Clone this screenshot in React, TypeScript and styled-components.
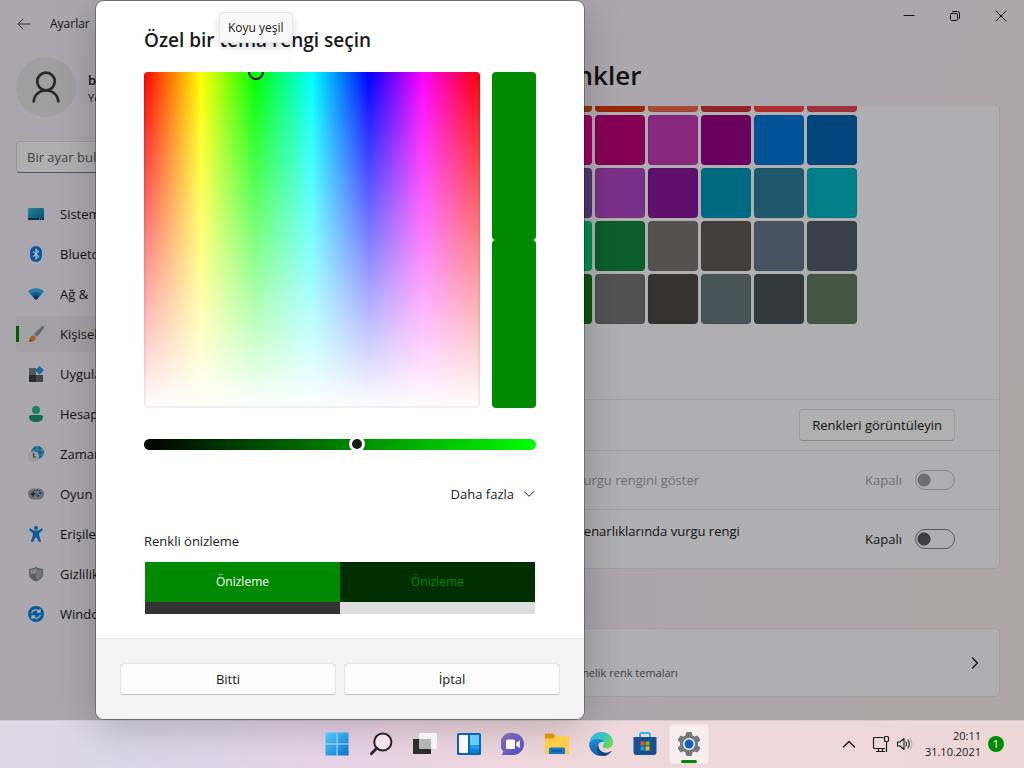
import React from "react";
import styled, { createGlobalStyle } from "styled-components";

const GlobalStyle = createGlobalStyle`
  *, *::before, *::after { box-sizing: border-box; }
  body {
    margin: 0;
    font-family: "Open Sans", "Noto Sans", sans-serif;
    font-size: 13px;
    line-height: 20px;
    color: #1a1a1a;
  }
  button, input { font: inherit; color: inherit; }
  h1, h2, p { margin: 0; font-weight: inherit; }
`;

const ACCENT = "#008a00";

const Screen = styled.div`
  display: flex;
  flex-direction: column;
  height: 100vh;
  overflow: hidden;
`;

/* ---------- settings window ---------- */

const AppWindow = styled.main`
  position: relative;
  flex: 1;
  min-height: 0;
  display: flex;
  flex-direction: column;
  background:
    radial-gradient(ellipse at 56% 84%, rgba(240, 230, 248, 0.6), transparent 16%),
    linear-gradient(115deg, #f3eef8 0%, #f5f0f8 45%, #f8f0f5 70%, #f8efef 100%);
`;

const TitleBar = styled.header`
  display: flex;
  align-items: center;
  height: 48px;
  padding-left: 8px;
`;

const BareButton = styled.button`
  display: grid;
  place-items: center;
  padding: 0;
  border: 0;
  background: transparent;
`;

const BackButton = styled(BareButton)`
  width: 32px;
  height: 32px;
`;

const AppName = styled.span`
  flex: 1;
  padding-left: 10px;
  font-size: 12px;
`;

const WindowControls = styled.div`
  display: flex;
  align-self: flex-start;
`;

const WindowControl = styled(BareButton)`
  width: 46px;
  height: 32px;
`;

const Body = styled.div`
  flex: 1;
  min-height: 0;
  display: flex;
`;

const Sidebar = styled.aside`
  width: 312px;
  flex: none;
  padding: 9px 16px 0;
`;

const Account = styled.div`
  display: flex;
  align-items: center;
  gap: 12px;
`;

const AccountText = styled.div`
  padding-top: 4px;
`;

const Avatar = styled.div`
  display: grid;
  place-items: center;
  width: 60px;
  height: 60px;
  border-radius: 50%;
  background: #e5e4e6;
`;

const AccountName = styled.p`
  font-weight: 600;
  line-height: 18px;
`;

const AccountKind = styled.p`
  font-size: 11px;
  line-height: 18px;
`;

const SearchBox = styled.input`
  display: block;
  width: 100%;
  height: 32px;
  margin: 24px 0 23px;
  padding: 0 10px;
  border: 1px solid #dcdadd;
  border-bottom-color: #77757a;
  border-radius: 4px;
  background: #fcfbfd;
  &::placeholder { color: #605e62; opacity: 1; }
`;

const Nav = styled.nav`
  display: flex;
  flex-direction: column;
  gap: 4px;
`;

const NavLink = styled.a<{ $active?: boolean }>`
  display: flex;
  align-items: center;
  gap: 16px;
  height: 36px;
  padding-left: 9px;
  border-left: 3px solid transparent;
  border-radius: 4px;
  color: inherit;
  text-decoration: none;
  background: ${(p) => (p.$active ? "linear-gradient(#008a00, #008a00) 0 center / 3px 16px no-repeat border-box, #eae6ee" : "transparent")};
`;

const Main = styled.section`
  flex: 1;
  min-width: 0;
  display: flex;
  flex-direction: column;
`;

const PageTitle = styled.h1`
  padding: 7px 24px 11px 233px;
  font-size: 26px;
  line-height: 40px;
  font-weight: 600;
`;

const Scroller = styled.div`
  flex: 1;
  min-height: 0;
  overflow: hidden;
  display: flex;
  flex-direction: column;
  justify-content: flex-end;
  gap: 59px;
  padding: 0 24px 23px 0;
`;

const Card = styled.div`
  flex: none;
  border: 1px solid #e6e2e7;
  border-radius: 4px;
  background: #fbfafc;
`;

const SwatchGrid = styled.div`
  display: grid;
  grid-template-columns: repeat(9, 50px);
  gap: 3px;
  padding: 0 0 75px 70px;
`;

const Swatch = styled.button<{ $color: string }>`
  height: 50px;
  padding: 0;
  border: 1px solid rgba(0, 0, 0, 0.06);
  border-radius: 4px;
  background: ${(p) => p.$color};
`;

const Row = styled.div<{ $tall?: boolean; $disabled?: boolean }>`
  display: flex;
  align-items: center;
  justify-content: flex-end;
  gap: 12px;
  height: ${(p) => (p.$tall ? 59 : 51)}px;
  padding: 0 44px 0 264px;
  border-top: 1px solid #e6e2e7;
  color: ${(p) => (p.$disabled ? "#a3a1a4" : "inherit")};
`;

const RowText = styled.span<{ $top?: boolean }>`
  flex: 1;
  align-self: ${(p) => (p.$top ? "flex-start" : "center")};
  padding-top: ${(p) => (p.$top ? 11 : 0)}px;
`;

const Standard = styled.button`
  height: 32px;
  padding: 0 12px;
  border: 1px solid #e2e1e3;
  border-bottom-color: #c4c3c5;
  border-radius: 4px;
  background: #fcfcfd;
`;

const ToggleLabel = styled.label`
  display: flex;
  align-items: center;
  gap: 13px;
`;

const Toggle = styled.input`
  appearance: none;
  width: 40px;
  height: 20px;
  margin: 0;
  border: 1px solid #807f81;
  border-radius: 10px;
  background: radial-gradient(circle at 8px 9px, #5c5b5d 6px, transparent 7px);
  &:disabled {
    border-color: #bdbbbe;
    background: radial-gradient(circle at 8px 9px, #9e9d9f 6px, transparent 7px);
  }
`;

const RelatedLink = styled.a`
  display: flex;
  align-items: center;
  justify-content: space-between;
  height: 67px;
  padding: 0 19px 0 257px;
  color: inherit;
  text-decoration: none;
`;

const Caption = styled.span`
  padding-top: 20px;
  font-size: 11px;
  color: #5f5e60;
`;

/* ---------- colour dialog ---------- */

const Smoke = styled.div`
  position: absolute;
  inset: 0;
  display: flex;
  align-items: center;
  padding-left: 96px;
  background: rgba(0, 0, 0, 0.3);
`;

const Dialog = styled.div`
  position: relative;
  width: 488px;
  border-radius: 8px;
  background: #fff;
  box-shadow: 0 0 0 1px rgba(0, 0, 0, 0.28), 0 8px 40px rgba(0, 0, 0, 0.22);
`;

const DialogBody = styled.div`
  padding: 25px 48px 24px;
`;

const DialogTitle = styled.h2`
  margin-bottom: 18px;
  font-size: 19px;
  line-height: 28px;
  font-weight: 600;
`;

const Tooltip = styled.div`
  position: absolute;
  top: 11px;
  left: 123px;
  padding: 6px 8px 5px;
  border: 1px solid #e6e6e6;
  border-radius: 4px;
  background: #f9f9f9;
  box-shadow: 0 4px 8px rgba(0, 0, 0, 0.14);
  font-size: 12px;
  line-height: 18px;
`;

const PickerRow = styled.div`
  display: flex;
  gap: 12px;
  height: 336px;
`;

const Spectrum = styled.div`
  position: relative;
  flex: 1;
  overflow: hidden;
  border-radius: 4px;
  background:
    linear-gradient(to bottom, rgba(255, 255, 255, 0), #fff),
    linear-gradient(to right, #f00, #ff0 17%, #0f0 33%, #0ff 50%, #00f 67%, #f0f 83%, #f00);
  &::after {
    content: "";
    position: absolute;
    inset: 0;
    border: 2px solid rgba(0, 0, 0, 0.06);
    border-top: 0;
    border-radius: 4px;
  }
`;

const SpectrumThumb = styled.span`
  position: absolute;
  top: -8px;
  left: 104px;
  width: 16px;
  height: 16px;
  border: 2px solid #111;
  border-radius: 50%;
`;

const ColorPair = styled.div`
  display: flex;
  flex-direction: column;
  width: 44px;
`;

const ColorBlock = styled.div`
  flex: 1;
  border-radius: 4px;
  background: ${ACCENT};
`;

const BrightnessTrack = styled.div`
  display: flex;
  align-items: center;
  height: 11px;
  margin: 31px 0 28px;
  border-radius: 6px;
  background: linear-gradient(to right, #000, #0f0);
`;

const Brightness = styled.input`
  appearance: none;
  width: 100%;
  height: 24px;
  margin: 0;
  background: none;
  &::-webkit-slider-runnable-track {
    height: 24px;
  }
  &::-webkit-slider-thumb {
    appearance: none;
    width: 16px;
    height: 16px;
    margin-top: 3px;
    border: 3px solid #fff;
    border-radius: 50%;
    background: #1a1a1a;
    box-shadow: 0 0 0 1px rgba(0, 0, 0, 0.08);
  }
`;

const MoreButton = styled.button`
  display: flex;
  align-items: center;
  gap: 8px;
  height: 32px;
  margin: 0 0 21px auto;
  padding: 0;
  border: 0;
  background: transparent;
`;

const PreviewLabel = styled.p`
  margin-bottom: 11px;
`;

const Preview = styled.div`
  display: grid;
  grid-template: 40px 12px / 1fr 1fr;
  margin: 0 1px;
`;

const PreviewCell = styled.div<{ $bg: string; $fg?: string }>`
  display: grid;
  place-items: center;
  font-size: 12px;
  background: ${(p) => p.$bg};
  color: ${(p) => p.$fg ?? "inherit"};
`;

const DialogFooter = styled.footer`
  display: grid;
  grid-template-columns: 1fr 1fr;
  gap: 8px;
  padding: 24px;
  border-top: 1px solid #e5e5e5;
  border-radius: 0 0 8px 8px;
  background: #f3f3f3;
`;

/* ---------- taskbar ---------- */

const Taskbar = styled.footer`
  flex: none;
  display: grid;
  grid-template-columns: 1fr auto 1fr;
  align-items: center;
  height: 48px;
  padding-bottom: 1px;
  border-top: 1px solid #d3cbd6;
  background: linear-gradient(to right, #dfd8e5 0%, #d9d7e7 12%, #dfd6e8 22%, #ead4e8 34%, #f0d8dd 50%, #eed8da 75%, #ecd6d6 100%);
`;

const Apps = styled.div`
  grid-column: 2;
  display: flex;
  gap: 4px;
  padding-left: 2px;
`;

const AppButton = styled(BareButton)<{ $active?: boolean }>`
  position: relative;
  width: 40px;
  height: 40px;
  border: 1px solid ${(p) => (p.$active ? "#efe2e4" : "transparent")};
  border-radius: 4px;
  background: ${(p) => (p.$active ? "#f8eef0" : "transparent")};
  &::after {
    content: "";
    display: ${(p) => (p.$active ? "block" : "none")};
    position: absolute;
    bottom: 0;
    left: 11px;
    width: 16px;
    height: 3px;
    border-radius: 2px;
    background: ${ACCENT};
  }
`;

const Tray = styled.div`
  display: flex;
  align-items: center;
  justify-content: flex-end;
  padding-right: 20px;
`;

const TrayButton = styled(BareButton)<{ $gap?: number }>`
  width: 18px;
  height: 32px;
  margin-right: ${(p) => p.$gap ?? 0}px;
`;

const Clock = styled.time`
  margin-right: 7px;
  font-size: 11px;
  line-height: 16px;
  text-align: right;
`;

const Badge = styled.span`
  display: grid;
  place-items: center;
  width: 16px;
  height: 16px;
  border-radius: 50%;
  background: ${ACCENT};
  color: #fff;
  font-size: 11px;
  line-height: 16px;
`;

/* ---------- icons ---------- */

const stroke = { fill: "none", stroke: "#1a1a1a", strokeLinecap: "round", strokeLinejoin: "round" } as const;

const navIcons: Record<string, React.ReactNode> = {
  system: (
    <>
      <defs><linearGradient id="sys" x1="0" y1="0" x2="1" y2="1"><stop stopColor="#35c1d6" /><stop offset="1" stopColor="#0c68a8" /></linearGradient></defs>
      <rect y="2" width="16" height="12" rx="1" fill="url(#sys)" />
      <path d="M0 12h16v1a1 1 0 0 1-1 1H1a1 1 0 0 1-1-1z" fill="#0b4468" />
      <path d="M11 12.5h1v1h-1zM13 12.5h1v1h-1z" fill="#cfe6f2" />
    </>
  ),
  bluetooth: (
    <>
      <rect x="2" width="12" height="16" rx="6" fill="#0a7ff0" />
      <path d="M5.2 5.4 10.6 10.4 8 12.7V3.3l2.6 2.3-5.4 5" fill="none" stroke="#fff" strokeWidth="1.2" />
    </>
  ),
  network: (
    <>
      <path d="M8 14 0 5.6C4.5 1.2 11.5 1.2 16 5.6z" fill="#35b5e8" />
      <path d="M8 14 2.6 8.3c3.1-3 7.7-3 10.8 0z" fill="#1c86d1" />
      <path d="M8 14 4.8 10.7c1.9-1.800 4.500-1.800 6.400 0z" fill="#0c4f9c" />
    </>
  ),
  brush: (
    <>
      <path d="M15.7.3c.5.5.3 1.3-.1 1.9L9.2 10.8 6 8.1 13.8.6c.5-.5 1.400-.8 1.900-.3z" fill="#8c9296" />
      <path d="M6 8.1 9.2 10.8 8 12 4.9 9.2z" fill="#c4c9cc" />
      <path d="M4.7 9.3 7.9 12c-.3 2.800-3.700 4.300-7.500 3.700C2.200 14.500 1.200 10 4.700 9.300z" fill="#f08a1d" />
      <path d="M.4 15.7c1.300-.7 1.600-1.800 1.900-2.800l2.400 1.600c-1 .9-2.700 1.400-4.300 1.200z" fill="#c85a10" />
    </>
  ),
  apps: (
    <>
      <path d="M1 2h7v7H1z" fill="#7b8084" />
      <path d="M1 9h7v7H2a1 1 0 0 1-1-1z" fill="#3b3f43" />
      <path d="M8 9h7v6a1 1 0 0 1-1 1H8z" fill="#5e6468" />
      <path d="m11.500 0 4.500 4.300-4.500 4.400L7.200 4.300z" fill="#2a97e0" />
    </>
  ),
  accounts: (
    <>
      <circle cx="8" cy="4" r="4" fill="#2ab793" />
      <path d="M3 9h10a2 2 0 0 1 2 2c0 3.300-3 5-7 5s-7-1.700-7-5a2 2 0 0 1 2-2z" fill="#189a7a" />
    </>
  ),
  time: (
    <>
      <circle cx="9.500" cy="6.500" r="6.500" fill="#1590cc" />
      <path d="M9.500 0v13M3.500 4h12M3.500 9h12M13 1.200c2 4 2 7 0 10.600" stroke="#6fd0f2" strokeWidth=".8" fill="none" />
      <circle cx="5.500" cy="10.500" r="5.500" fill="#dedede" />
      <path d="M5.500 7v4H8" fill="none" stroke="#555" strokeWidth="1.200" />
    </>
  ),
  gaming: (
    <>
      <rect y="2.500" width="16" height="11" rx="5.500" fill="#9ba1a6" />
      <path d="M5 5.500v5M2.500 8h5" stroke="#33373a" strokeWidth="1.300" />
      <path d="M11 4h1v1h-1zM6 4h1v1H6zM8.500 4h1v1h-1z" fill="#33373a" />
      <circle cx="10" cy="9.500" r="1.200" fill="#1277d3" /><circle cx="12.500" cy="7" r="1.200" fill="#1277d3" />
    </>
  ),
  access: (
    <>
      <circle cx="8" cy="2" r="2" fill="#1583d8" />
      <path d="M2 2.300 6 4.500h4L14 2.300l1 1.700-3.800 3v2.500l2 6-2.200.5L8.500 11.500h-1L5 16l-2.200-.5 2-6V7L1 4z" fill="#1583d8" />
    </>
  ),
  privacy: (
    <>
      <path d="M8 .8c2 1.500 4.300 2 7 2v5c0 4-3 6.400-7 7.700-4-1.300-7-3.700-7-7.700v-5c2.700 0 5-.5 7-2z" fill="#82888c" />
      <path d="M8 2.200c1.700 1.100 3.600 1.600 5.800 1.700v3.900c0 3.200-2.400 5.200-5.800 6.400z" fill="#a5abaf" />
      <path d="M8 2.200C6.300 3.300 4.400 3.800 2.200 3.900v3.900H8z" fill="#bfc4c7" />
    </>
  ),
  update: (
    <>
      <circle cx="8" cy="8" r="8" fill="#0b85d8" />
      <path d="M3.500 7.200C4.200 3.800 9 2.600 11.600 5.400M12 3v3H9M12.500 8.800c-.7 3.400-5.500 4.600-8.100 1.800M4 13v-3h3" fill="none" stroke="#fff" strokeWidth="1.300" />
    </>
  ),
};

const appIcons: Record<string, React.ReactNode> = {
  start: (
    <>
      <defs><linearGradient id="win" x1="0" y1="0" x2="1" y2="1"><stop stopColor="#4fd0ff" /><stop offset="1" stopColor="#0672cf" /></linearGradient></defs>
      <path d="M.5.500h11v11H.5zM12.500.500h11v11h-11zM.5 12.500h11v11H.5zM12.500 12.500h11v11h-11z" fill="url(#win)" />
    </>
  ),
  search: (
    <>
      <circle cx="13.800" cy="10" r="8.600" fill="#f3e4f0" stroke="#242424" strokeWidth="2" />
      <path d="M7.500 16.500 2.300 21.700" stroke="#242424" strokeWidth="2.800" strokeLinecap="round" />
    </>
  ),
  taskview: (
    <>
      <path d="M0 7h18v15H0z" fill="#2d2d2d" />
      <path d="M6 1h18v16H6z" fill="#f4f4f4" />
      <path d="M6 7h12v10H6z" fill="#b4b4b4" />
    </>
  ),
  widgets: (
    <>
      <rect y="1" width="24" height="22" rx="1.500" fill="#0f62b4" />
      <rect x="2" y="3" width="9" height="18" rx="1" fill="#f8f8f8" />
      <path d="M13 3h9v10h-9z" fill="#60d2fc" /><path d="M13 13h9v4h-9z" fill="#1a9df0" /><path d="M13 17h9v4h-9z" fill="#0a7fdc" />
    </>
  ),
  chat: (
    <>
      <defs><linearGradient id="chat" x1="0" y1="0" x2="1" y2="1"><stop stopColor="#8d6cb0" /><stop offset="1" stopColor="#4a50c8" /></linearGradient></defs>
      <path d="M12 1a11 11 0 1 1 0 22H1.500c-.6 0-.8-.6-.4-1l1.300-2.500A11 11 0 0 1 12 1z" fill="url(#chat)" />
      <rect x="5" y="7.500" width="9" height="9.500" rx="1.500" fill="#fff" />
      <path d="m15.300 11 3.500-2.700v8l-3.500-2.700z" fill="#fff" />
    </>
  ),
  explorer: (
    <>
      <path d="M0 2.500A1 1 0 0 1 1 1.500h7l2.500 2.500-2.500 3H0z" fill="#d99406" />
      <path d="M0 6.500h8l2.500-2.500H23a1 1 0 0 1 1 1v17H0z" fill="#fdce45" />
      <path d="M4 22v-5a1.500 1.500 0 0 1 1.500-1.500h13A1.500 1.500 0 0 1 20 17v5z" fill="#1277cf" />
      <path d="M7 18h10v1.500H7z" fill="#0b508f" />
    </>
  ),
  edge: (
    <>
      <defs>
        <linearGradient id="edgeA" x1="0" y1="0" x2="1" y2=".6"><stop stopColor="#2fb3e8" /><stop offset=".6" stopColor="#36c9b8" /><stop offset="1" stopColor="#6edc52" /></linearGradient>
        <linearGradient id="edgeB" x1="0" y1="0" x2="0" y2="1"><stop stopColor="#1b8fdb" /><stop offset="1" stopColor="#0f5fb0" /></linearGradient>
      </defs>
      <path d="M.3 10.500C1.300 4.500 6.200 0 12.200 0 19 0 24 4.700 24 10.200c0 3.900-2.900 6.300-6.300 6.300-2.600 0-4.200-1-4.200-2 0-.8 1.300-1.100 1.300-3.200 0-2.600-2.700-4.700-6.300-4.700C4.800 6.600 1.800 8.200.3 10.500z" fill="url(#edgeA)" />
      <path d="M.1 11.500C1.500 8.300 4.800 6.600 8.500 6.600c3.400 0 5.800 1.700 6.300 3.700-1.300-.8-5.500-.6-5.500 4.200 0 4.500 3.600 8.300 7.200 8.500A12 12 0 0 1 .1 11.500z" fill="url(#edgeB)" />
      <path d="M9.300 13.500c0 4.700 4.300 7.500 8 7.200 2.200-.2 3.800-.9 4.800-1.700.4-.3.700 0 .4.400A12 12 0 0 1 14 24C9 23.500 6 18 9.300 13.500z" fill="#10447e" />
    </>
  ),
  store: (
    <>
      <path d="M7 5V2.500A1.500 1.500 0 0 1 8.500 1h7A1.500 1.500 0 0 1 17 2.500V5" fill="none" stroke="#2fb4ec" strokeWidth="2" />
      <path d="M.5 5h23v15a3 3 0 0 1-3 3h-17a3 3 0 0 1-3-3z" fill="#174f93" />
      <path d="M7.500 9.500h4v4h-4z" fill="#f25022" /><path d="M12.500 9.500h4v4h-4z" fill="#7fba00" />
      <path d="M7.500 14.500h4v4h-4z" fill="#00a4ef" /><path d="M12.500 14.500h4v4h-4z" fill="#ffb900" />
    </>
  ),
  settings: (
    <>
      <path d="M9.600.500h4.800l.7 3.300 2.200 1.300 3.200-1.100 2.400 4.200-2.500 2.200v3.200l2.500 2.200-2.400 4.200-3.200-1.100-2.200 1.300-.7 3.300H9.600l-.7-3.300-2.200-1.300-3.200 1.100-2.400-4.200 2.500-2.200v-3.200L1.100 8.200 3.500 4l3.200 1.100 2.200-1.300z" fill="#74797e" stroke="#74797e" strokeLinejoin="round" />
      <circle cx="12" cy="12" r="6" fill="#f2f2f2" />
      <circle cx="12" cy="12" r="4.500" fill="#0f62b4" />
    </>
  ),
};

const NavIcon = ({ name }: { name: string }) => (
  <svg width="16" height="16" viewBox="0 0 16 16" aria-hidden="true">{navIcons[name]}</svg>
);

const AppIcon = ({ name }: { name: string }) => (
  <svg width="24" height="24" viewBox="0 0 24 24" aria-hidden="true">{appIcons[name]}</svg>
);

/* ---------- data ---------- */

const navItems = [
  ["system", "Sistem"],
  ["bluetooth", "Bluetooth"],
  ["network", "Ağ &"],
  ["brush", "Kişiselleştirme"],
  ["apps", "Uygulamalar"],
  ["accounts", "Hesaplar"],
  ["time", "Zaman ve dil"],
  ["gaming", "Oyun"],
  ["access", "Erişilebilirlik"],
  ["privacy", "Gizlilik"],
  ["update", "Windows Update"],
];

const swatches = [
  "#ffb900", "#ff8c00", "#f7630c", "#ca5010", "#da3b01", "#ef6950", "#d13438", "#ff4343", "#e74856",
  "#e81123", "#ea005e", "#c30052", "#e3008c", "#bf0077", "#c239b3", "#9a0089", "#0078d7", "#0063b1",
  "#8e8cd8", "#6b69d6", "#8764b8", "#744da9", "#b146c2", "#881798", "#0099bc", "#2d7d9a", "#00b7c3",
  "#038387", "#00b294", "#018574", "#00cc6a", "#10893e", "#7a7574", "#5d5a58", "#68768a", "#515c6b",
  "#567c73", "#486860", "#498205", "#107c10", "#767676", "#4c4a48", "#69797e", "#4a5459", "#647c64",
];

const apps = [
  ["start", "Başlat"],
  ["search", "Ara"],
  ["taskview", "Görev görünümü"],
  ["widgets", "Pencere öğeleri"],
  ["chat", "Sohbet"],
  ["explorer", "Dosya Gezgini"],
  ["edge", "Edge"],
  ["store", "Store"],
  ["settings", "Ayarlar"],
];

const SettingsSidebar = () => (
  <Sidebar>
    <Account>
      <Avatar>
        <svg width="28" height="32" viewBox="0 0 28 32" {...stroke} stroke="#3c3b3d" strokeWidth="2.700" strokeLinecap="butt" aria-hidden="true">
          <circle cx="14" cy="10.500" r="8.800" />
          <path d="M1.700 31.500c0-7 5-12 12.300-12s12.300 5 12.300 12" />
        </svg>
      </Avatar>
      <AccountText>
        <AccountName>b</AccountName>
        <AccountKind>Yerel</AccountKind>
      </AccountText>
    </Account>
    <SearchBox type="text" placeholder="Bir ayar bulun" aria-label="Bir ayar bulun" />
    <Nav>
      {navItems.map(([icon, label]) => (
        <NavLink key={icon} href="#" $active={icon === "brush"}>
          <NavIcon name={icon} />
          {label}
        </NavLink>
      ))}
    </Nav>
  </Sidebar>
);

const ColorSettings = () => (
  <Main>
    <PageTitle>Renkler</PageTitle>
    <Scroller>
      <Card>
        <SwatchGrid>
          {swatches.map((c) => (
            <Swatch key={c} $color={c} aria-label={c} />
          ))}
        </SwatchGrid>
        <Row>
          <Standard>Renkleri görüntüleyin</Standard>
        </Row>
        <Row $tall $disabled>
          <RowText>vurgu rengini göster</RowText>
          <ToggleLabel>
            Kapalı
            <Toggle type="checkbox" role="switch" disabled />
          </ToggleLabel>
        </Row>
        <Row $tall>
          <RowText $top>kenarlıklarında vurgu rengi</RowText>
          <ToggleLabel>
            Kapalı
            <Toggle type="checkbox" role="switch" />
          </ToggleLabel>
        </Row>
      </Card>
      <Card>
        <RelatedLink href="#">
          <Caption>yönelik renk temaları</Caption>
          <svg width="10" height="12" viewBox="0 0 10 12" {...stroke} strokeWidth="1.300" aria-hidden="true">
            <path d="m2.500 1 5 5-5 5" />
          </svg>
        </RelatedLink>
      </Card>
    </Scroller>
  </Main>
);

const ColorDialog = () => (
  <Smoke>
    <Dialog role="dialog" aria-labelledby="dialog-title">
      <DialogBody>
        <DialogTitle id="dialog-title">Özel bir tema rengi seçin</DialogTitle>
        <PickerRow>
          <Spectrum>
            <SpectrumThumb />
          </Spectrum>
          <ColorPair>
            <ColorBlock />
            <ColorBlock />
          </ColorPair>
        </PickerRow>
        <BrightnessTrack>
          <Brightness type="range" min="0" max="200" defaultValue="109" aria-label="Parlaklık" />
        </BrightnessTrack>
        <MoreButton>
          Daha fazla
          <svg width="14" height="12" viewBox="0 0 14 12" {...stroke} aria-hidden="true">
            <path d="m2.500 3.800 4.500 4.500 4.500-4.500" />
          </svg>
        </MoreButton>
        <PreviewLabel>Renkli önizleme</PreviewLabel>
        <Preview>
          <PreviewCell $bg={ACCENT} $fg="#fff">Önizleme</PreviewCell>
          <PreviewCell $bg="#002e00" $fg={ACCENT}>Önizleme</PreviewCell>
          <PreviewCell $bg="#333" />
          <PreviewCell $bg="#ddd" />
        </Preview>
      </DialogBody>
      <DialogFooter>
        <Standard>Bitti</Standard>
        <Standard>İptal</Standard>
      </DialogFooter>
      <Tooltip role="tooltip">Koyu yeşil</Tooltip>
    </Dialog>
  </Smoke>
);

export default function App() {
  return (
    <Screen>
      <GlobalStyle />
      <AppWindow>
        <TitleBar>
          <BackButton aria-label="Geri">
            <svg width="14" height="12" viewBox="0 0 14 12" {...stroke} stroke="#4a4a4a" aria-hidden="true">
              <path d="M13 6H1M6 1 1 6l5 5" />
            </svg>
          </BackButton>
          <AppName>Ayarlar</AppName>
          <WindowControls>
            <WindowControl aria-label="Simge durumuna küçült">
              <svg width="12" height="12" viewBox="0 0 12 12" {...stroke}><path d="M1 5.500h10" /></svg>
            </WindowControl>
            <WindowControl aria-label="Önceki boyut">
              <svg width="12" height="12" viewBox="0 0 12 12" {...stroke}>
                <rect x="1.500" y="3.500" width="7" height="7" rx="1" />
                <path d="M3.500 1.500h5a2 2 0 0 1 2 2v5" />
              </svg>
            </WindowControl>
            <WindowControl aria-label="Kapat">
              <svg width="12" height="12" viewBox="0 0 12 12" {...stroke}><path d="m1 1 10 10M11 1 1 11" /></svg>
            </WindowControl>
          </WindowControls>
        </TitleBar>
        <Body>
          <SettingsSidebar />
          <ColorSettings />
        </Body>
        <ColorDialog />
      </AppWindow>
      <Taskbar>
        <Apps>
          {apps.map(([icon, label]) => (
            <AppButton key={icon} aria-label={label} $active={icon === "settings"}>
              <AppIcon name={icon} />
            </AppButton>
          ))}
        </Apps>
        <Tray>
          <TrayButton aria-label="Gizli simgeleri göster" $gap={14}>
            <svg width="14" height="10" viewBox="0 0 14 10" {...stroke} strokeWidth="1.400"><path d="m1.500 8 5.500-5.500L12.500 8" /></svg>
          </TrayButton>
          <TrayButton aria-label="Ağ" $gap={6}>
            <svg width="18" height="18" viewBox="0 0 18 18" {...stroke} strokeWidth="1.200">
              <path d="M11 2.500H2.500a1 1 0 0 0-1 1v9a1 1 0 0 0 1 1h10M4.500 16.500h8M6.500 13.500v3M10.500 13.500v3M14.500 6.500v10" />
              <rect x="12.500" y="1.500" width="4" height="5" rx="1" />
            </svg>
          </TrayButton>
          <TrayButton aria-label="Ses" $gap={11}>
            <svg width="17" height="14" viewBox="0 0 17 14" {...stroke} strokeWidth="1.100">
              <path d="M1.500 5h2.500L8 1.500v11L4 9H1.500z" />
              <path d="M10 5c.8 1.200.8 2.800 0 4M12 3.200c1.600 2.200 1.600 5.400 0 7.600" />
              <path d="M14 1.500c2.400 3.200 2.400 7.800 0 11" stroke="#b5a5a5" />
            </svg>
          </TrayButton>
          <Clock>
            20:11
            <br />
            31.10.2021
          </Clock>
          <Badge>1</Badge>
        </Tray>
      </Taskbar>
    </Screen>
  );
}
